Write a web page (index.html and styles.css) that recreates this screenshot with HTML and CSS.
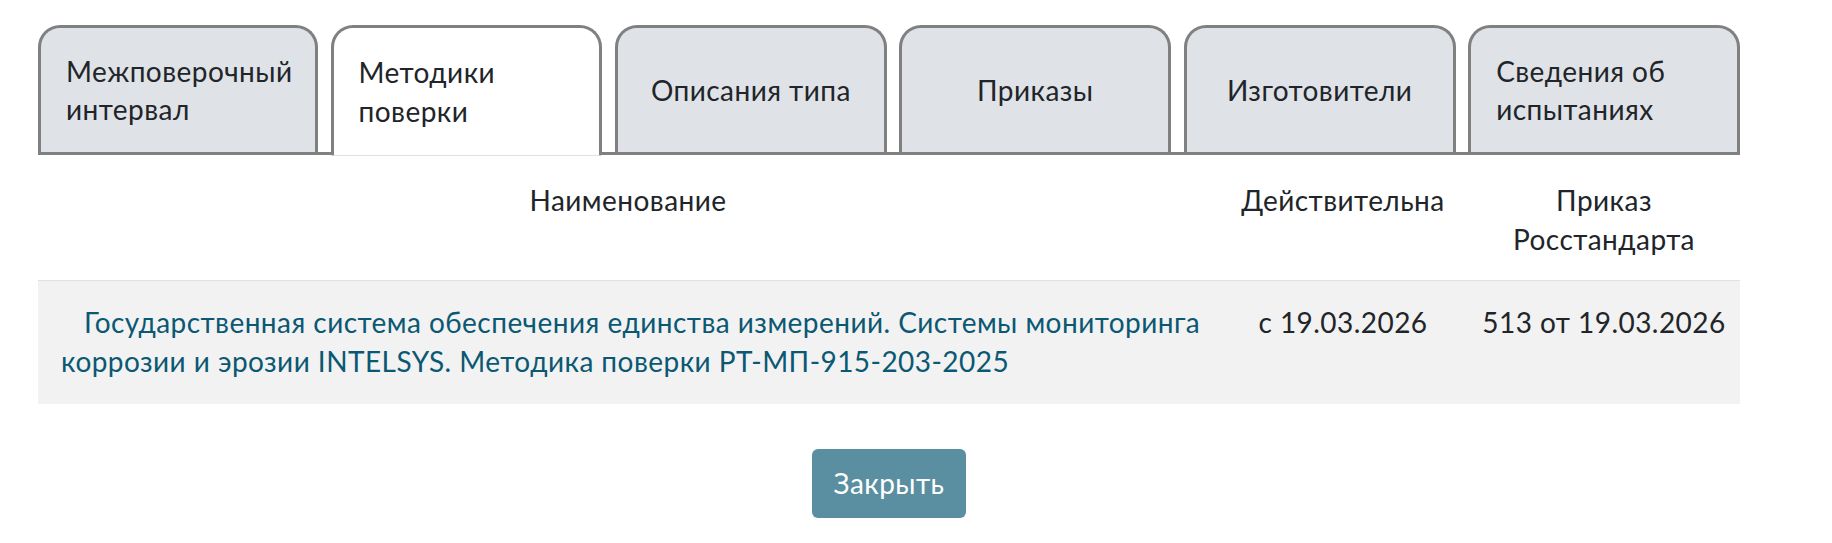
FILE: index.html
```html
<!DOCTYPE html>
<html lang="ru">
<head>
<meta charset="utf-8">
<title>Методики поверки</title>
<link rel="stylesheet" href="styles.css">
</head>
<body>
<div class="page">
  <div class="tabs">
    <div class="tab tab-wide"><span>Межповерочный интервал</span></div>
    <div class="tab active"><span>Методики поверки</span></div>
    <div class="tab"><span>Описания типа</span></div>
    <div class="tab"><span>Приказы</span></div>
    <div class="tab"><span>Изготовители</span></div>
    <div class="tab"><span>Сведения об испытаниях</span></div>
  </div>
  <table class="grid">
    <colgroup>
      <col class="c-name">
      <col class="c-valid">
      <col class="c-order">
    </colgroup>
    <thead>
      <tr>
        <th>Наименование</th>
        <th>Действительна</th>
        <th>Приказ Росстандарта</th>
      </tr>
    </thead>
    <tbody>
      <tr>
        <td class="name"><a href="#">Государственная система обеспечения единства измерений. Системы мониторинга коррозии и эрозии INTELSYS. Методика поверки РТ-МП-915-203-2025</a></td>
        <td class="center">с 19.03.2026</td>
        <td class="center">513 от 19.03.2026</td>
      </tr>
    </tbody>
  </table>
  <div class="actions">
    <button class="btn" type="button">Закрыть</button>
  </div>
</div>
</body>
</html>
```

FILE: styles.css
```css
html, body {
  margin: 0;
  padding: 0;
  background: #ffffff;
}

body {
  font-family: "Lato", "Liberation Sans", sans-serif;
  font-size: 28px;
  line-height: 38.5px;
  letter-spacing: 0.45px;
  color: #212529;
}

.page {
  width: 1702px;
  margin-left: 38px;
  padding-top: 25px;
}

.tabs {
  display: flex;
  gap: 12.5px;
  border-bottom: 3px solid #808080;
}

.tab {
  flex: 1 1 0;
  min-width: 0;
  box-sizing: border-box;
  height: 127px;
  display: flex;
  align-items: center;
  justify-content: center;
  padding: 0 25px;
  background: #dfe2e6;
  border: 3px solid #808080;
  border-bottom: 0;
  border-radius: 22px 22px 0 0;
}

.tab-wide {
  flex: 0 0 280px;
}

.tab span {
  text-align: left;
  min-width: 0;
}

.tab.active {
  background: #ffffff;
  height: 131px;
  margin-bottom: -4px;
  border-bottom: 1px solid #dee2e6;
  border-radius: 22px 22px 3px 3px;
}

.grid {
  width: 100%;
  border-collapse: collapse;
  table-layout: fixed;
}

.c-name { width: 1180px; }
.c-valid { width: 250px; }
.c-order { width: 272px; }

.grid th {
  font-weight: normal;
  text-align: center;
  vertical-align: top;
  padding: 26px 10px 22px;
  border-bottom: 1px solid #dee2e6;
}

.grid td {
  vertical-align: top;
  padding: 22px 10px 24px;
  background: #f2f2f2;
}

.grid td.name {
  padding-left: 23px;
  text-indent: 23px;
}

.grid td.center {
  text-align: center;
}

.grid a {
  color: #0b5873;
  text-decoration: none;
}

.actions {
  display: flex;
  justify-content: center;
  padding-top: 45px;
}

.btn {
  font-family: inherit;
  font-size: 28px;
  line-height: 38.5px;
  letter-spacing: 0.45px;
  color: #ffffff;
  background: #5a8fa1;
  border: 0;
  border-radius: 6px;
  padding: 15px 10px 15.5px;
  width: 154px;
}
```
